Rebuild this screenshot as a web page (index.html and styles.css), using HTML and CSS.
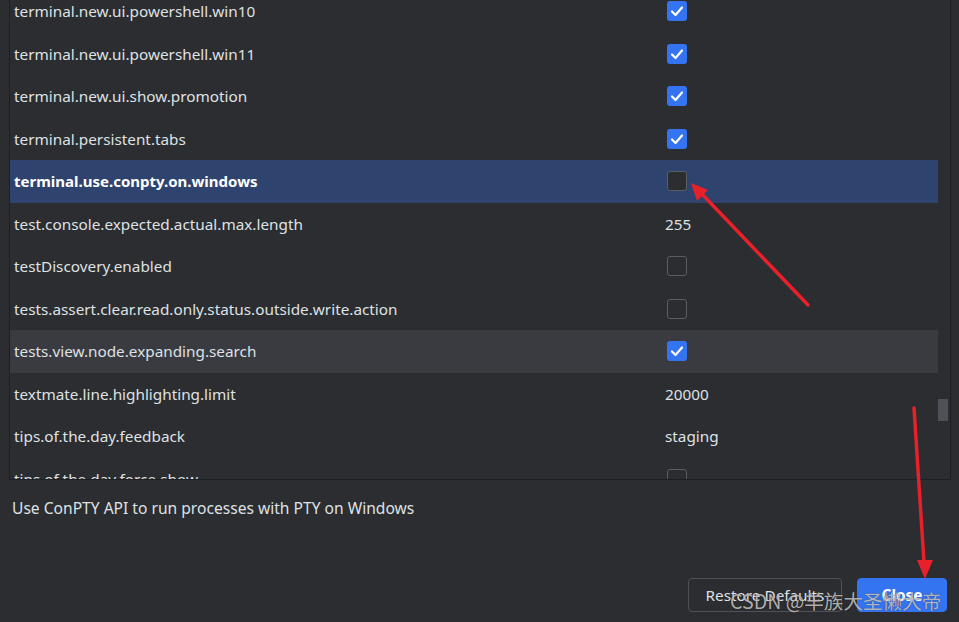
FILE: index.html
```
<!DOCTYPE html>
<html>
<head>
<meta charset="utf-8">
<link rel="stylesheet" href="styles.css">
</head>
<body>
<div class="page">
  <div class="table">
    <div class="rows">
      <div class="row first"><span class="key">terminal.new.ui.powershell.win10</span><span class="val"><span class="cb on"></span></span></div>
      <div class="row"><span class="key">terminal.new.ui.powershell.win11</span><span class="val"><span class="cb on"></span></span></div>
      <div class="row"><span class="key">terminal.new.ui.show.promotion</span><span class="val"><span class="cb on"></span></span></div>
      <div class="row"><span class="key">terminal.persistent.tabs</span><span class="val"><span class="cb on"></span></span></div>
      <div class="row selected"><span class="key">terminal.use.conpty.on.windows</span><span class="val"><span class="cb"></span></span></div>
      <div class="row"><span class="key">test.console.expected.actual.max.length</span><span class="val">255</span></div>
      <div class="row"><span class="key">testDiscovery.enabled</span><span class="val"><span class="cb"></span></span></div>
      <div class="row"><span class="key">tests.assert.clear.read.only.status.outside.write.action</span><span class="val"><span class="cb"></span></span></div>
      <div class="row hover"><span class="key">tests.view.node.expanding.search</span><span class="val"><span class="cb on"></span></span></div>
      <div class="row"><span class="key">textmate.line.highlighting.limit</span><span class="val">20000</span></div>
      <div class="row"><span class="key">tips.of.the.day.feedback</span><span class="val">staging</span></div>
      <div class="row"><span class="key">tips.of.the.day.force.show</span><span class="val"><span class="cb"></span></span></div>
    </div>
    <div class="scrollbar"><div class="thumb"></div></div>
  </div>
  <div class="desc">Use ConPTY API to run processes with PTY on Windows</div>
  <div class="buttons">
    <button class="btn">Restore Defaults</button>
    <button class="btn primary">Close</button>
  </div>
</div>
<div class="watermark">CSDN @羊族大圣懒大帝</div>
<svg class="arrows" width="959" height="622" viewBox="0 0 959 622">
  <line x1="808" y1="305" x2="700" y2="192" stroke="#e8202a" stroke-width="3.5" stroke-linecap="round"/>
  <polygon points="691,183 708,190 697,201" fill="#e8202a"/>
  <line x1="914" y1="408" x2="924" y2="562" stroke="#e8202a" stroke-width="3.5" stroke-linecap="round"/>
  <polygon points="925,579 917,560 933,560" fill="#e8202a"/>
</svg>
</body>
</html>
```
FILE: styles.css
```
html, body {
  margin: 0;
  padding: 0;
  background: #2b2d30;
}
body {
  width: 959px;
  height: 622px;
  overflow: hidden;
  position: relative;
  font-family: "Noto Sans", "Open Sans", sans-serif;
  font-size: 15.3px;
  color: #dfe1e5;
}
.page {
  display: flex;
  flex-direction: column;
  height: 622px;
}
.table {
  margin-left: 9px;
  width: 940px;
  height: 479px;
  border-left: 1px solid #1e1f22;
  border-right: 1px solid #1e1f22;
  border-bottom: 1px solid #1e1f22;
  display: flex;
  overflow: hidden;
  flex-shrink: 0;
}
.rows {
  width: 928px;
  flex-shrink: 0;
}
.row {
  height: 42.5px;
  display: flex;
  align-items: center;
}
.row.first {
  margin-top: -10px;
}
.row.selected {
  background: #2e436e;
}
.row.selected .key {
  font-weight: bold;
  color: #ffffff;
  font-size: 15px;
}
.row.hover {
  background: #393b40;
}
.key {
  padding-left: 4px;
  width: 651px;
  flex-shrink: 0;
}
.val {
  display: flex;
  align-items: center;
}
.cb {
  display: block;
  width: 18px;
  height: 18px;
  margin-left: 2px;
  border: 1px solid #5a5d63;
  border-radius: 3px;
  background: #2b2d30;
}
.cb.on {
  width: 20px;
  height: 20px;
  border: none;
  background: #3574f0 url("data:image/svg+xml;utf8,<svg xmlns='http://www.w3.org/2000/svg' width='20' height='20' viewBox='0 0 20 20'><path d='M5 10.5 L8.5 14 L15 6.5' fill='none' stroke='white' stroke-width='2.2' stroke-linecap='round' stroke-linejoin='round'/></svg>") no-repeat center;
}
.scrollbar {
  width: 12px;
  flex-shrink: 0;
}
.thumb {
  margin-top: 399px;
  width: 10px;
  height: 22px;
  background: #4e5157;
}
.desc {
  padding: 17px 0 0 12px;
  line-height: 22px;
  font-size: 15.6px;
}
.buttons {
  margin-top: auto;
  display: flex;
  justify-content: flex-end;
  gap: 15px;
  padding: 0 12px 10px 0;
}
.btn {
  height: 34px;
  border-radius: 4px;
  font-family: "Noto Sans", "Open Sans", sans-serif;
  font-size: 15.3px;
  color: #dfe1e5;
  background: #2b2d30;
  border: 1px solid #4e5157;
  width: 154px;
  padding: 0;
}
.btn.primary {
  width: 90px;
  background: #3574f0;
  border-color: #3574f0;
  color: #fff;
  font-weight: bold;
}
.watermark {
  position: absolute;
  left: 730px;
  top: 588px;
  font-family: "Noto Sans CJK SC", "Noto Sans", sans-serif;
  font-size: 19.6px;
  line-height: 26px;
  color: rgba(215, 215, 215, 0.8);
  text-shadow: 0 0 1px rgba(0,0,0,0.6);
}
.arrows {
  position: absolute;
  left: 0;
  top: 0;
  pointer-events: none;
}
```
